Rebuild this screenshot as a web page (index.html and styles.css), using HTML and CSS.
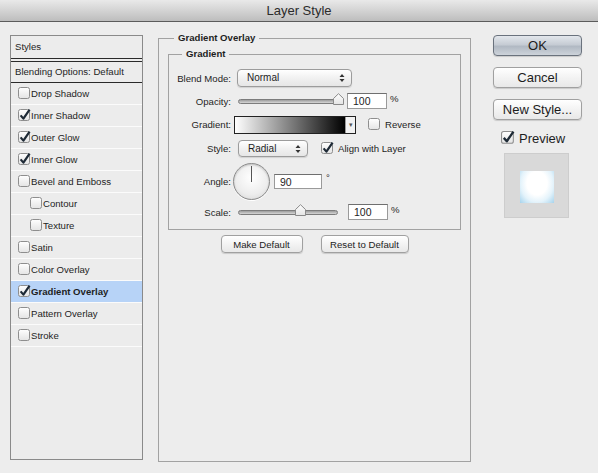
FILE: index.html
```html
<!DOCTYPE html>
<html lang="en">
<head>
<meta charset="UTF-8">
<meta name="viewport" content="width=device-width, initial-scale=1.0">
<title>Layer Style</title>
<link rel="stylesheet" href="styles.css">
</head>
<body>
<svg width="0" height="0" style="position:absolute">
  <defs>
    <linearGradient id="boxfill" x1="0" y1="0" x2="0" y2="1">
      <stop offset="0" stop-color="#ffffff"/>
      <stop offset="1" stop-color="#e4e4e4"/>
    </linearGradient>
    <symbol id="cb-off" viewBox="0 0 14 14">
      <rect x="0.5" y="0.5" width="11" height="11" rx="2" fill="url(#boxfill)" stroke="#8e8e8e"/>
    </symbol>
    <symbol id="cb-on" viewBox="0 0 14 14">
      <rect x="0.5" y="0.5" width="11" height="11" rx="2" fill="url(#boxfill)" stroke="#8e8e8e"/>
      <path d="M2.6 6.4 L5.4 9.6 L11.6 0.6" fill="none" stroke="#1e2a36" stroke-width="2.2" stroke-linejoin="round"/>
    </symbol>
    <symbol id="updown" viewBox="0 0 6 10">
      <path d="M0.5 4 L3 1 L5.5 4 Z M0.5 6 L3 9 L5.5 6 Z" fill="#333"/>
    </symbol>
    <symbol id="thumb" viewBox="0 0 11 12">
      <path d="M0.5 11.5 V5.5 L5.5 0.7 L10.5 5.5 V11.5 Z" fill="url(#boxfill)" stroke="#8a8a8a"/>
    </symbol>
  </defs>
</svg>

<div class="titlebar">Layer Style</div>

<div class="main">
  <div class="styles-panel">
    <div class="styles-head">Styles</div>
    <div class="blend-row">Blending Options: Default</div>
    <div class="fx"><svg class="cb"><use href="#cb-off"/></svg>Drop Shadow</div>
    <div class="fx"><svg class="cb"><use href="#cb-on"/></svg>Inner Shadow</div>
    <div class="fx"><svg class="cb"><use href="#cb-on"/></svg>Outer Glow</div>
    <div class="fx"><svg class="cb"><use href="#cb-on"/></svg>Inner Glow</div>
    <div class="fx"><svg class="cb"><use href="#cb-off"/></svg>Bevel and Emboss</div>
    <div class="fx sub"><svg class="cb"><use href="#cb-off"/></svg>Contour</div>
    <div class="fx sub"><svg class="cb"><use href="#cb-off"/></svg>Texture</div>
    <div class="fx"><svg class="cb"><use href="#cb-off"/></svg>Satin</div>
    <div class="fx"><svg class="cb"><use href="#cb-off"/></svg>Color Overlay</div>
    <div class="fx selected"><svg class="cb"><use href="#cb-on"/></svg>Gradient Overlay</div>
    <div class="fx"><svg class="cb"><use href="#cb-off"/></svg>Pattern Overlay</div>
    <div class="fx"><svg class="cb"><use href="#cb-off"/></svg>Stroke</div>
  </div>

  <fieldset class="group">
    <legend>Gradient Overlay</legend>
    <fieldset class="subgroup">
      <legend>Gradient</legend>

      <div class="row r-blend">
        <span class="lbl">Blend Mode:</span>
        <div class="select blend-select">Normal<svg class="arrows"><use href="#updown"/></svg></div>
      </div>

      <div class="row r-opacity">
        <span class="lbl">Opacity:</span>
        <div class="slider opacity-slider">
          <div class="track"></div>
          <svg class="thumb" style="left: 95px"><use href="#thumb"/></svg>
        </div>
        <div class="field num-field">100</div>
        <span class="unit">%</span>
      </div>

      <div class="row r-gradient">
        <span class="lbl">Gradient:</span>
        <div class="gradbox">
          <div class="ramp"></div>
          <div class="drop">&#9662;</div>
        </div>
        <svg class="cb reverse-cb"><use href="#cb-off"/></svg>
        <span class="cb-text">Reverse</span>
      </div>

      <div class="row r-style">
        <span class="lbl">Style:</span>
        <div class="select style-select">Radial<svg class="arrows"><use href="#updown"/></svg></div>
        <svg class="cb align-cb"><use href="#cb-on"/></svg>
        <span class="cb-text">Align with Layer</span>
      </div>

      <div class="row r-angle">
        <span class="lbl">Angle:</span>
        <div class="dial"><div class="needle"></div></div>
        <div class="field angle-field">90</div>
        <span class="deg">&deg;</span>
      </div>

      <div class="row r-scale">
        <span class="lbl">Scale:</span>
        <div class="slider scale-slider">
          <div class="track"></div>
          <svg class="thumb" style="left: 57px"><use href="#thumb"/></svg>
        </div>
        <div class="field scale-field">100</div>
        <span class="unit">%</span>
      </div>
    </fieldset>

    <div class="defaults">
      <button class="btn small make-default">Make Default</button>
      <button class="btn small reset-default">Reset to Default</button>
    </div>
  </fieldset>

  <div class="actions">
    <button class="btn big ok">OK</button>
    <button class="btn big">Cancel</button>
    <button class="btn big">New Style...</button>
    <div class="preview-check"><svg class="cb big-cb"><use href="#cb-on"/></svg>Preview</div>
    <div class="preview">
      <div class="swatch"></div>
    </div>
  </div>
</div>
</body>
</html>
```

FILE: styles.css
```css
body {
  margin: 0;
  width: 598px;
  height: 473px;
  overflow: hidden;
  background-color: #ededed;
  font-family: "Liberation Sans", Arial, sans-serif;
  font-size: 9.6px;
  color: #1e1e1e;
}

.titlebar {
  height: 21px;
  line-height: 21px;
  text-align: center;
  font-size: 13px;
  color: #2b2b2b;
  background: linear-gradient(#e9e9e9, #cfcfcf 60%, #bdbdbd);
  border-bottom: 1px solid #5c5c5c;
}

.main {
  display: flex;
  align-items: flex-start;
  padding-left: 10px;
}

/* left list */
.styles-panel {
  box-sizing: border-box;
  width: 133px;
  height: 425px;
  margin-top: 13px;
  border: 1px solid #8a8a8a;
  background-color: #ececec;
}

.styles-head {
  height: 22px;
  line-height: 22px;
  padding-left: 4px;
  border-bottom: 1px solid #2a2a2a;
}

.blend-row {
  height: 20px;
  line-height: 20px;
  margin-top: 2px;
  padding-left: 4px;
  border-top: 1px solid #2a2a2a;
  border-bottom: 1px solid #2a2a2a;
}

.fx {
  display: flex;
  align-items: center;
  height: 21px;
  padding-left: 7px;
  border-bottom: 1px solid #fbfbfb;
}

.fx.sub {
  padding-left: 19px;
}

.fx.selected {
  background-color: #b7d3f7;
  font-weight: bold;
}

.cb {
  width: 14px;
  height: 14px;
  flex: none;
  overflow: visible;
}

.fx .cb {
  margin-right: -1px;
}

/* middle group */
fieldset {
  margin: 0;
  padding: 0;
  min-width: 0;
  border: 1px solid #a2a2a2;
}

legend {
  padding: 0 4px;
  line-height: 14px;
  font-weight: bold;
}

.group {
  box-sizing: border-box;
  width: 313px;
  height: 431px;
  margin: 9px 0 0 15px;
}

.group > legend {
  margin-left: 15px;
}

.subgroup {
  margin: 2px 9px 0 9px;
  padding-bottom: 9px;
}

.subgroup > legend {
  margin-left: 13px;
}

.row {
  display: flex;
  align-items: center;
}

.lbl {
  width: 62px;
  flex: none;
  text-align: right;
}

.r-blend { height: 18px; margin-top: 8px; }
.r-opacity { height: 16px; margin-top: 6px; }
.r-gradient { height: 17px; margin-top: 7px; }
.r-style { height: 17px; margin-top: 7px; }
.r-angle { height: 37px; margin-top: 6px; }
.r-scale { height: 16px; margin-top: 4px; }

.select {
  box-sizing: border-box;
  position: relative;
  height: 18px;
  line-height: 16px;
  padding-left: 9px;
  font-size: 10px;
  border: 1px solid #9c9c9c;
  border-radius: 4px;
  background: linear-gradient(#ffffff, #f1f1f1 50%, #e6e6e6);
  box-shadow: 0 1px 1px rgba(0, 0, 0, 0.12);
}

.arrows {
  position: absolute;
  right: 6px;
  top: 3px;
  width: 6px;
  height: 10px;
}

.blend-select {
  width: 115px;
  margin-left: 6px;
}

.style-select {
  width: 70px;
  height: 17px;
  margin-left: 7px;
}

.slider {
  position: relative;
  height: 16px;
}

.track {
  position: absolute;
  left: 0;
  right: 0;
  top: 6px;
  height: 5px;
  border: 1px solid #7c7c7c;
  border-radius: 4px;
  box-sizing: border-box;
  background: linear-gradient(#9c9c9c, #d6d6d6);
}

.thumb {
  position: absolute;
  top: 0;
  width: 11px;
  height: 12px;
}

.opacity-slider {
  width: 102px;
  margin-left: 7px;
}

.scale-slider {
  width: 100px;
  margin-left: 7px;
}

.field {
  box-sizing: border-box;
  height: 16px;
  line-height: 15px;
  padding-left: 5px;
  font-size: 10.5px;
  background-color: #fff;
  border: 1px solid #9a9a9a;
  border-top-color: #6f6f6f;
}

.num-field {
  width: 40px;
  margin-left: 7px;
}

.scale-field {
  width: 40px;
  margin-left: 10px;
}

.angle-field {
  width: 48px;
  height: 15px;
  line-height: 14px;
  margin-left: 4px;
}

.unit {
  margin-left: 3px;
  align-self: flex-start;
}

.deg {
  margin-left: 4px;
  align-self: flex-start;
  margin-top: 9px;
}

.gradbox {
  box-sizing: border-box;
  display: flex;
  width: 122px;
  height: 18px;
  margin-left: 3px;
  border: 1px solid #222;
}

.ramp {
  flex: 1;
  background: linear-gradient(to right, #ffffff, #000000);
}

.drop {
  width: 9px;
  line-height: 16px;
  text-align: center;
  font-size: 7px;
  color: #555;
  background-color: #f2f2f2;
  border-left: 1px solid #999;
}

.reverse-cb {
  margin-left: 12px;
}

.align-cb {
  margin-left: 13px;
}

.cb-text {
  margin-left: 3px;
}

.dial {
  box-sizing: border-box;
  position: relative;
  width: 37px;
  height: 37px;
  margin-left: 2px;
  border: 1px solid #8a8a8a;
  border-radius: 50%;
  background: radial-gradient(circle at 50% 40%, #ffffff, #ededed 60%, #d2d2d2);
  box-shadow: inset 0 1px 2px rgba(0, 0, 0, 0.2), 0 1px 0 #fff;
}

.needle {
  position: absolute;
  left: 17px;
  top: 2px;
  width: 1px;
  height: 16px;
  background-color: #555;
}

.defaults {
  display: flex;
  justify-content: center;
  gap: 18px;
  margin-top: 5px;
}

.btn {
  box-sizing: border-box;
  font-family: inherit;
  color: #1c1c1c;
  padding: 0;
  border: 1px solid #a0a0a0;
  border-radius: 4px;
  background: linear-gradient(#ffffff, #f3f3f3 50%, #e8e8e8);
  box-shadow: 0 1px 1px rgba(0, 0, 0, 0.15);
}

.btn.small {
  height: 18px;
  font-size: 9.6px;
}

.make-default {
  width: 82px;
}

.reset-default {
  width: 88px;
}

/* right column */
.actions {
  display: flex;
  flex-direction: column;
  width: 89px;
  margin: 13px 0 0 22px;
}

.btn.big {
  height: 21px;
  font-size: 13px;
  margin-bottom: 11px;
}

.btn.ok {
  border-color: #6a727d;
  background: linear-gradient(#e3e7ec, #c6ccd4 45%, #b1b9c3 55%, #cdd3da);
}

.preview-check {
  display: flex;
  align-items: center;
  font-size: 13px;
  margin: 0 0 0 8px;
  height: 15px;
}

.big-cb {
  width: 15px;
  height: 15px;
  margin-right: 3px;
}

.preview {
  display: flex;
  align-items: center;
  justify-content: center;
  width: 65px;
  height: 65px;
  margin: 7px 0 0 11px;
  background-color: #d9d9d9;
  border: 1px solid #cdcdcd;
  box-sizing: border-box;
}

.swatch {
  width: 34px;
  height: 32px;
  margin-top: 2px;
  background: radial-gradient(ellipse at 50% 38%, #ffffff 42%, #e4f3fb 68%, #a6d3ec 100%);
}
```
